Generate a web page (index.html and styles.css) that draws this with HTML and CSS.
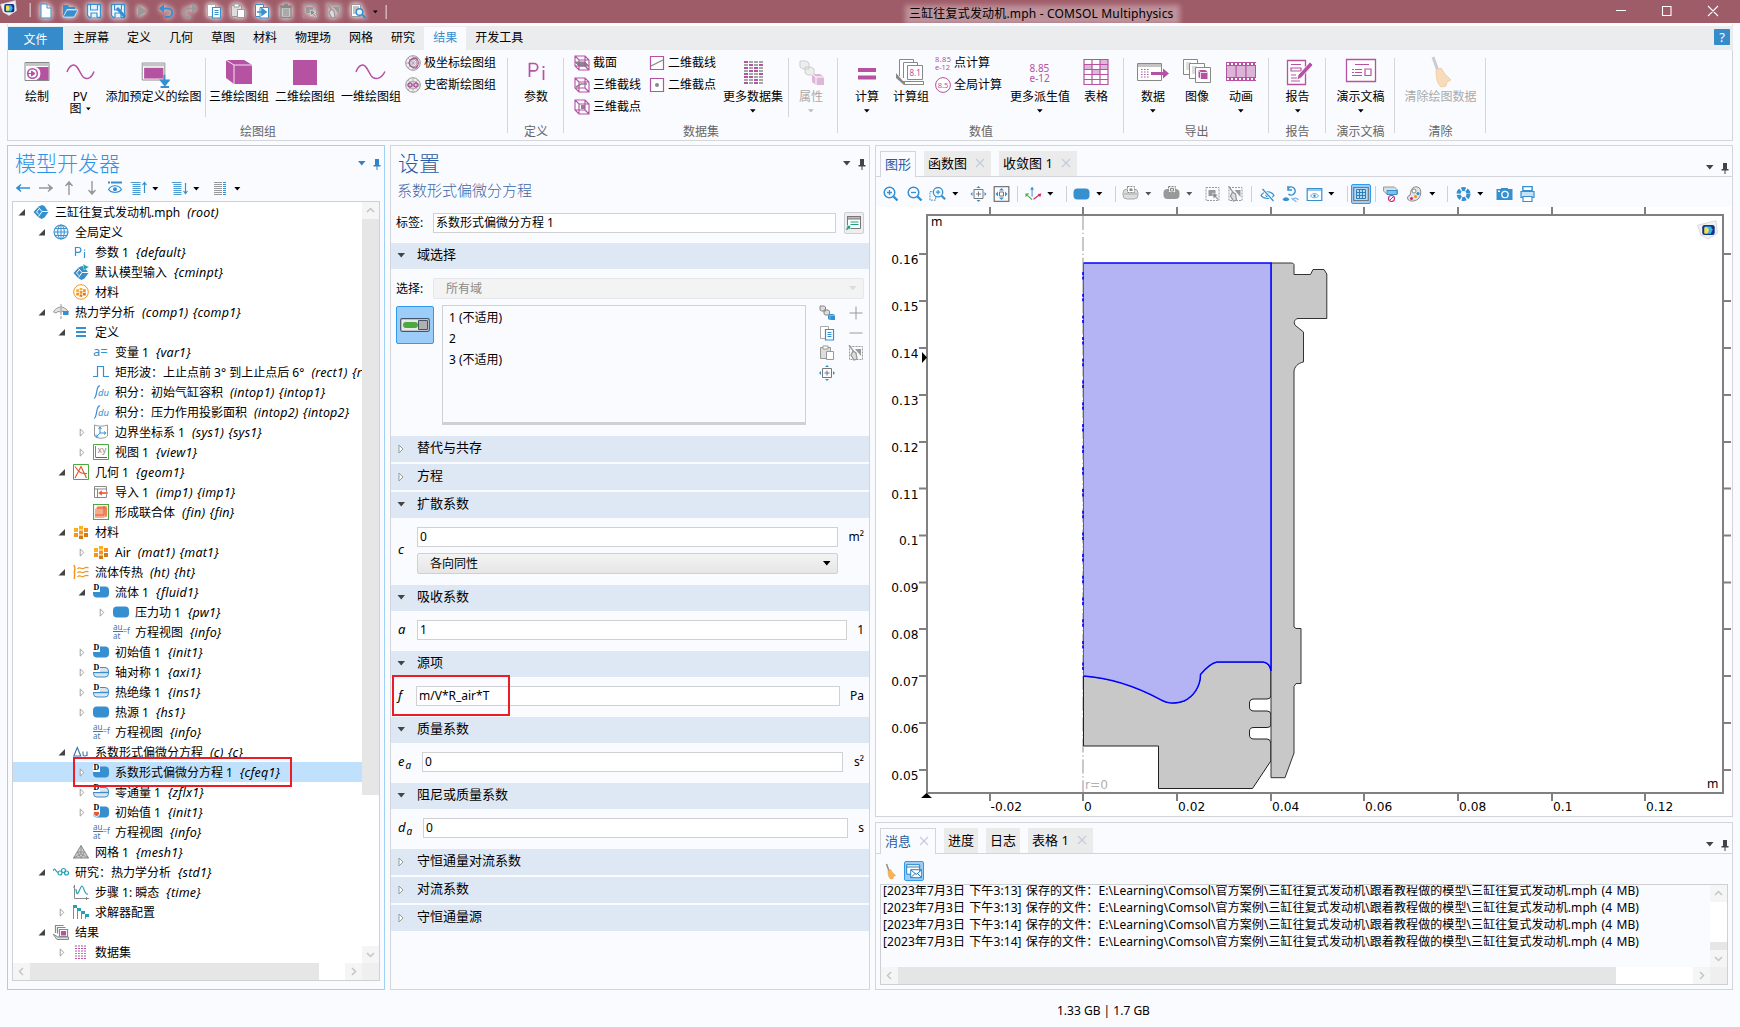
FILE: index.html
```html
<!DOCTYPE html>
<html lang="zh-CN">
<head>
<meta charset="utf-8">
<title>三缸往复式发动机.mph - COMSOL Multiphysics</title>
<link rel="stylesheet" href="styles.css">
</head>
<body>
<svg class="sprite" aria-hidden="true">
  <!-- shared small glyphs -->
  <symbol id="tri" viewBox="0 0 8 5"><path d="M0 0h7.500L3.750 4.500z" fill="currentColor"/></symbol>
  <symbol id="pin" viewBox="0 0 8 11"><path d="M2 0h4v6h1.500v1.500h-3V11h-1V7.500h-3V6H2z" fill="currentColor"/></symbol>
  <symbol id="open" viewBox="0 0 8 8"><path d="M7 .5v6.500H.5z" fill="#444"/></symbol>
  <symbol id="shut" viewBox="0 0 8 10"><path d="M2 1l4 4-4 4z" fill="#fff" stroke="#999"/></symbol>
  <symbol id="x" viewBox="0 0 10 10"><path d="M1 1l8 8M9 1L1 9" fill="none" stroke="#c3cbdc" stroke-width="1.200"/></symbol>
  <!-- 16px toolbar icons -->
  <symbol id="q-new" viewBox="0 0 16 16"><path d="M3 1h6l4 4v10H3z" fill="#fff" stroke="#368fcf"/><path d="M9 1v4h4" fill="#fff" stroke="#368fcf"/></symbol>
  <symbol id="q-open" viewBox="0 0 16 16"><path d="M1 14V2h5l1 2h6v2H5z" fill="#368fcf"/><path d="M5 7h11l-4 7H1z" fill="#368fcf" stroke="#fff" stroke-width=".6"/></symbol>
  <symbol id="q-save" viewBox="0 0 16 16"><path d="M1.500 1.500h13v13h-11l-2-2z" fill="#fff" stroke="#368fcf" stroke-width="1.400"/><path d="M4.500 2v5h7V2M5 14.500V10h6v4.500" fill="#e6f2fb" stroke="#368fcf" stroke-width="1.200"/></symbol>
  <symbol id="q-saveas" viewBox="0 0 16 16"><use href="#q-save"/><path d="M7 5l8 9" stroke="#368fcf" stroke-width="3"/></symbol>
  <symbol id="q-play" viewBox="0 0 16 16"><path d="M4 2l9 6-9 6z" fill="#999"/></symbol>
  <symbol id="q-undo" viewBox="0 0 16 16"><path d="M2 5.500h8a4 4 0 0 1 0 8.500H7" fill="none" stroke="#368fcf" stroke-width="1.800"/><path d="M6 1v9L1 5.500z" fill="#368fcf"/></symbol>
  <symbol id="q-redo" viewBox="0 0 16 16"><path d="M14 5.500H6A4 4 0 0 0 6 14h3" fill="none" stroke="#999" stroke-width="1.800"/><path d="M10 1v9l5-4.500z" fill="#999"/></symbol>
  <symbol id="q-copy" viewBox="0 0 16 16"><path d="M1.500 1.500h8v12h-8z" fill="#fff" stroke="#aaa"/><path d="M6.500 4.500h8v10.500h-8z" fill="#fff" stroke="#368fcf" stroke-width="1.200"/><path d="M8.500 7.500h4M8.500 9.500h4M8.500 11.500h4" stroke="#368fcf"/></symbol>
  <symbol id="q-paste" viewBox="0 0 16 16"><path d="M1.500 2.500h10v11h-10z" fill="#ddd" stroke="#999"/><path d="M4 1h5v3H4z" fill="#fff" stroke="#999"/><path d="M7.500 6.500h7v8h-7z" fill="#fff" stroke="#999"/></symbol>
  <symbol id="q-dup" viewBox="0 0 16 16"><path d="M1.500 1.500h8v12h-8z" fill="#fff" stroke="#368fcf"/><path d="M6 4.500h8.500V15H6z" fill="#fff" stroke="#368fcf"/><path d="M3 9h7M8 6l4 3-4 3z" stroke="#368fcf" stroke-width="1.600" fill="#368fcf"/></symbol>
  <symbol id="q-trash" viewBox="0 0 16 16"><path d="M3 4.500h10v10H3zM2 3h12M6 1.500h4" fill="#ccc" stroke="#888" stroke-width="1.300"/><path d="M6 6v7M8 6v7M10 6v7" stroke="#888"/></symbol>
  <symbol id="sel" viewBox="0 0 16 16"><path d="M1.500 1.500h13v13h-13z" fill="none" stroke="#999" stroke-dasharray="2 1"/><path d="M4 4h7v6H4z" fill="#999"/><path d="M8 7l6 2-2.500 1.300 3 3-1 1-3-3L9 13z" fill="#888" stroke="#fff" stroke-width=".5"/></symbol>
  <symbol id="desel" viewBox="0 0 16 16"><path d="M1.500 1.500h13v13h-13z" fill="none" stroke="#999" stroke-dasharray="2 1"/><path d="M7 4h6v7z" fill="#999"/><path d="M1 0l5 7M5 6l3 2 1 6-3 1-3-5z" stroke="#999" stroke-width="1.300" fill="#ddd"/></symbol>
  <symbol id="q-find" viewBox="0 0 16 16"><path d="M1.500 1.500h9v12h-9z" fill="#fff" stroke="#999"/><path d="M3 4h6M3 6h6M3 8h4M3 10h3" stroke="#888"/><circle cx="9.500" cy="9" r="3.300" fill="#e6f2fb" stroke="#368fcf" stroke-width="1.500"/><path d="M12 11.500l3.500 3.500" stroke="#368fcf" stroke-width="2"/></symbol>
  <symbol id="logo" viewBox="0 0 16 16"><path d="M.5 4l8-2 6-1.500 1 9.500-7 4.500-5.500-3z" fill="#f1f1f4" stroke="#d0d0d6" stroke-width=".6"/><rect x="4" y="3.800" width="9.500" height="7.700" rx="1.800" fill="#13328c"/><path d="M6 5h4.500l1.500 2.500-1.500 3H6z" fill="#35b6e6"/><path d="M5.500 5.500h2.500l1.200 2.200L8 10.200H5.500z" fill="#f3e24a"/></symbol>
  <!-- tree icons -->
  <symbol id="t-root" viewBox="0 0 16 16"><path d="M5.500 2.500L9 1l2.500 1L15.500 8l-4 5.500L8.500 15 5 13 .5 8z" fill="#368fcf"/><path d="M5.500 3.500L9 7.500h6.500M9 7.500L5.500 12.500M6 5L3.500 8 6 10.500" stroke="#fff" stroke-width="1" fill="none"/></symbol>
  <symbol id="t-globe" viewBox="0 0 16 16"><circle cx="8" cy="8" r="7" fill="#eef6fc" stroke="#368fcf" stroke-width="1.100"/><ellipse cx="8" cy="8" rx="3.300" ry="7" fill="none" stroke="#368fcf"/><path d="M1 8h14M2 4.500h12M2 11.500h12M8 1v14" stroke="#368fcf" stroke-width=".9"/></symbol>
  <symbol id="t-pi" viewBox="0 0 16 16"><path d="M2.500 12V3.500h3a2.400 2.400 0 0 1 0 4.800h-3M11.500 8v6" fill="none" stroke="#368fcf" stroke-width="1.200"/><path d="M11 5.500h1.200v1.200H11z" fill="#368fcf"/></symbol>
  <symbol id="t-input" viewBox="0 0 16 16"><use href="#t-root" y="1"/><path d="M10 0l6 3-5 3z" fill="#1fa3a8" stroke="#fff" stroke-width=".4"/></symbol>
  <symbol id="t-mat" viewBox="0 0 16 16"><path d="M1 4h4v4H1zM6 2h4v3.500H6z" fill="#fbb01c"/><path d="M11 4h4v4h-4zM6 6.500h4v4H6zM1 9h4v4H1z" fill="#f39322"/><path d="M11 9h4v4h-4zM6 11.500h4V15H6z" fill="#d07a18"/></symbol>
  <symbol id="t-gmat" viewBox="0 0 16 16"><circle cx="8" cy="8" r="7.300" fill="#fff" stroke="#f39322"/><svg x="2.500" y="2.500" width="11" height="11" viewBox="0 0 16 16"><use href="#t-mat"/></svg></symbol>
  <symbol id="t-axi" viewBox="0 0 16 16"><path d="M.5 8c1-3 5-5 7.500-5s6 2 7.500 5l-3 1-2-2-2.500 1-3-.5L3 9z" fill="#e3e3e3" stroke="#999"/><path d="M10 7h5.500v4H10z" fill="#368fcf"/><path d="M8 0v16" stroke="#999" stroke-dasharray="3 1"/></symbol>
  <symbol id="t-def" viewBox="0 0 16 16"><path d="M3 4h10M3 8h10M3 12h10" stroke="#368fcf" stroke-width="2"/></symbol>
  <symbol id="t-rect" viewBox="0 0 16 16"><path d="M0 12.500h4.500v-10h6v10H16" fill="none" stroke="#368fcf" stroke-width="1.200"/></symbol>
  <symbol id="t-sys" viewBox="0 0 16 16"><path d="M1.500 1c3 1.500 10 1.500 13 0v11c-3 3-10 3-13 0z" fill="none" stroke="#999"/><path d="M7 3.500V9l-3.500 3.500M7 9h5M5.500 5L7 3l1.500 2M11 7.500L13 9l-2 1.500M3 10.500v2.500h2.500" stroke="#368fcf" fill="none"/></symbol>
  <symbol id="t-view" viewBox="0 0 16 16"><path d="M.5.5h15v15H.5z" fill="#fff" stroke="#4aa93f"/><path d="M2.500 2v11" stroke="#4aa93f"/><path d="M2.500 13.500H14" stroke="#d5286c"/></symbol>
  <symbol id="t-geom" viewBox="0 0 16 16"><path d="M.5.5h15v15H.5z" fill="#fff" stroke="#4aa93f"/><path d="M2 2.500c3 4 5 8 12 7M2 14L8 2.500 13.500 14" fill="none" stroke="#e8592b" stroke-width="1.200"/></symbol>
  <symbol id="t-imp" viewBox="0 0 16 16"><path d="M1.500 2.500h12v11h-12zM1.500 5h12M4.500 5v8.500" fill="#fff" stroke="#888"/><path d="M5 9l4-3v2h6v2H9v2z" fill="#e8592b" stroke="#fff" stroke-width=".4"/></symbol>
  <symbol id="t-fin" viewBox="0 0 16 16"><path d="M.5.5h15v15H.5z" fill="#fff" stroke="#4aa93f" stroke-width="1.200"/><path d="M2 5l3-3h9v9l-3 3H2z" fill="#f5ab8c"/><path d="M2 11h9V2M4 4h9v9" fill="none" stroke="#e8592b"/></symbol>
  <symbol id="t-ht" viewBox="0 0 16 16"><path d="M1 1c2 4 0 6 .5 8S1 13 1.500 15" fill="none" stroke="#f39322" stroke-width="1.500"/><path d="M4.500 5c2-3 4 .5 6-.5s3-2 5-.5M4.500 9c2-3 4 .5 6-.5s3-2 5-.5M4.500 13c2-3 4 .5 6-.5s3-2 5-.5" fill="none" stroke="#f39322" stroke-width="1.200"/></symbol>
  <symbol id="t-dom" viewBox="0 0 16 16"><rect x="0" y="2.500" width="16" height="11" rx="4" fill="#368fcf"/></symbol>
  <symbol id="t-bnd" viewBox="0 0 16 16"><rect x=".5" y="3.500" width="15" height="9.500" rx="3.500" fill="#e3e4e8" stroke="#368fcf"/><path d="M0 8.500h16" stroke="#368fcf" stroke-width="1.400"/></symbol>
  <symbol id="t-du" viewBox="0 0 16 16"><path d="M.8 12L4.300 3.500 7.800 12zM10 7.500v3c0 2 4 2 4 0v-3V12" fill="none" stroke="#3f74a8" stroke-width="1.100"/></symbol>
  <symbol id="t-mesh" viewBox="0 0 16 16"><path d="M8 1.500L15.500 14H.5z" fill="#ccc" stroke="#888"/><path d="M4.500 8h7L8 14zM8 1.500V10M.5 14L8 10l7.500 4" fill="none" stroke="#888" stroke-width=".8"/></symbol>
  <symbol id="t-std" viewBox="0 0 16 16"><path d="M0 7c2-5 3 2 5 1" fill="none" stroke="#26a0b5" stroke-width="1.200"/><circle cx="7" cy="9" r="2" fill="none" stroke="#26a0b5" stroke-width="1.200"/><circle cx="10.500" cy="6.500" r="2" fill="none" stroke="#26a0b5" stroke-width="1.200"/><circle cx="13.500" cy="9" r="2" fill="none" stroke="#26a0b5" stroke-width="1.200"/></symbol>
  <symbol id="t-step" viewBox="0 0 16 16"><path d="M1.500 1v13.500H16M0 3h1.500M13.500 13v3" fill="none" stroke="#888"/><path d="M3 5c1 12 4-3 6-3s2 9 6 8" fill="none" stroke="#26a0b5" stroke-width="1.200"/></symbol>
  <symbol id="t-sol" viewBox="0 0 16 16"><path d="M.5 1v14M4.500 4v11M8.500 7v8M12.500 11v4" stroke="#888"/><path d="M0 1h4v3H0zM4 4h4v3H4zM8 7h4v3H8zM12 10h4v3h-4z" fill="#26a0b5"/></symbol>
  <symbol id="t-res" viewBox="0 0 16 16"><path d="M2.500 9V1.500h8M4.500 9.500v-6h8M6.500 5.500h8v7h-8z" fill="#fff" stroke="#888" stroke-width="1.200"/><path d="M8 7h5v4.500H8z" fill="#b552a2"/><path d="M0 10l5 3h10.500v2.500H4z" fill="#ddd" stroke="#888"/></symbol>
  <symbol id="t-data" viewBox="0 0 16 16"><g stroke="#b552a2" stroke-dasharray="2 1"><path d="M2 2h12M2 4.500h12M2 7h12M2 12h12M2 14.500h12"/><path d="M2 9.500h12" stroke="#999"/></g></symbol>
  <!-- model builder toolbar -->
  <symbol id="a-l" viewBox="0 0 16 16"><path d="M2 8h13M6 4.500L2 8l4 3.500" fill="none" stroke="currentColor" stroke-width="1.400"/><path d="M1 8l4-3v6z" fill="currentColor"/></symbol>
  <symbol id="eye" viewBox="0 0 16 16"><path d="M1.500 9.500c3-5 10-5 13 0-3 4-10 4-13 0z" fill="none" stroke="currentColor" stroke-width="1.200"/><circle cx="8" cy="9.300" r="2" fill="currentColor"/></symbol>
  <symbol id="m-eye" viewBox="0 0 16 16"><path d="M1 2.500h2M4 2.500h11" stroke="#368fcf" stroke-width="1.800"/><use href="#eye"/></symbol>
  <symbol id="m-list" viewBox="0 0 12 16"><path d="M0 2.500h10M2 4.500h8M2 6.500h8M2 8.500h8M2 10.500h8M2 12.500h8M2 14.500h8" stroke="#368fcf" stroke-width=".9"/></symbol>
  <symbol id="m-up" viewBox="0 0 17 16"><use href="#m-list" width="12" height="16"/><path d="M14 13V3M12 5l2-2.500L16 5" stroke="#368fcf" fill="none" stroke-width="1.200"/></symbol>
  <symbol id="m-down" viewBox="0 0 17 16"><use href="#m-list" width="12" height="16"/><path d="M14 3v10M12 11l2 2.500 2-2.500" stroke="#368fcf" fill="none" stroke-width="1.200"/></symbol>
  <symbol id="m-col" viewBox="0 0 16 16"><path d="M1 2.500h8M1 4.500h8M1 6.500h8M1 8.500h8M1 10.500h8M1 12.500h8M1 14.500h8" stroke="#999"/><path d="M10 2.500h3M10 4.500h3M10 6.500h3M10 8.500h3M10 10.500h3M10 12.500h3M10 14.500h3" stroke="#368fcf"/></symbol>
  <!-- selection icons -->
  <symbol id="s-cubes" viewBox="0 0 16 16"><g stroke="#888" fill="#ddd"><path d="M1 1h4l1.500 1v4h-4L1 5zM5 5h4l1.500 1v4h-4L5 9z"/></g><path d="M9 9h5l2 1v5h-5l-2-1z" fill="#368fcf"/><path d="M9 9l2 1.500h5M11 10.500V15" stroke="#9cc9ea" stroke-width=".7" fill="none"/></symbol>
  <symbol id="z-fit" viewBox="0 0 16 16"><path d="M3.500 3.500h9v9h-9zM8 5.500v5M5.500 8h5" fill="none" stroke="#777"/><path d="M8 0l2 2H6zM8 16l2-2H6zM0 8l2-2v4zM16 8l-2-2v4z" fill="#368fcf"/></symbol>
  <symbol id="z-ext" viewBox="0 0 16 16"><path d="M.7.7h14.600v14.600H.700z" fill="none" stroke="#777" stroke-width="1.300"/><path d="M6 6h4v4H6z" fill="none" stroke="#777"/><path d="M8 2l2.500 2.500h-5zM8 14l2.500-2.500h-5zM2 8l2.500-2.500v5zM14 8l-2.500-2.500v5z" fill="#368fcf"/></symbol>
  <!-- graphics toolbar -->
  <symbol id="z-lens" viewBox="0 0 16 16"><circle cx="7" cy="6.500" r="5.300" fill="none" stroke="#368fcf" stroke-width="1.500"/><path d="M11 10.500l4 4" stroke="#368fcf" stroke-width="2.400"/><path d="M4.500 6.500h5" stroke="#368fcf" stroke-width="1.300"/></symbol>
  <symbol id="z-in" viewBox="0 0 16 16"><use href="#z-lens"/><path d="M7 4v5" stroke="#368fcf" stroke-width="1.300"/></symbol>
  <symbol id="z-box" viewBox="0 0 18 16"><path d="M1 5.500h6v9H1z" fill="none" stroke="#368fcf" stroke-dasharray="2 1"/><svg x="3" y="0" width="15" height="15" viewBox="0 0 16 16"><circle cx="7" cy="6.500" r="5.300" fill="#fafbff"/><use href="#z-in"/></svg></symbol>
  <symbol id="z-axes" viewBox="0 0 18 16"><path d="M7.500 11V2.500" stroke="#368fcf"/><path d="M7.500 0l2 3.500h-4z" fill="#368fcf"/><path d="M7.500 14L2.500 9.500" stroke="#4aa93f" stroke-width="1.200"/><path d="M.5 7.500h4l-4 4z" fill="#4aa93f"/><path d="M9 13.500L15 9" stroke="#d5286c" stroke-width="1.200"/><path d="M17.500 7.500l-1.500 4-2.500-3.500z" fill="#d5286c"/></symbol>
  <symbol id="z-dom1" viewBox="0 0 16 16"><rect x=".5" y="3" width="15" height="10" rx="4" fill="#ddd" stroke="#aaa"/><path d="M1 8h14" stroke="#aaa"/><path d="M5 .5h7v6H5z" fill="#fff" stroke="#888" stroke-dasharray="2 1"/><path d="M7 2.500h3V5H7z" fill="#888"/></symbol>
  <symbol id="z-dom2" viewBox="0 0 16 16"><rect x="0" y="3" width="16" height="10" rx="4" fill="#999"/><path d="M5 .5h7v6H5z" fill="#eee" stroke="#888" stroke-dasharray="2 1"/><path d="M7 2.500h3V5H7z" fill="none" stroke="#888"/></symbol>
  <symbol id="z-hide" viewBox="0 0 16 16"><use href="#eye"/><path d="M3 3l11 12" stroke="#fafbff" stroke-width="3"/><path d="M3 3l11 12" stroke="#368fcf" stroke-width="1.300"/></symbol>
  <symbol id="z-reset" viewBox="0 0 16 16"><path d="M5 8a4 4 0 1 0 0-6M4.500 0v4h4" transform="translate(1)" fill="none" stroke="#368fcf" stroke-width="1.500"/><path d="M0 13.500c2-3 5-3 7 0-2 2-5 2-7 0z" fill="#368fcf"/><path d="M9 12l5 4M10 14c2-3 4-2 6 0" stroke="#7fb6e0" stroke-width="1.200" fill="none"/></symbol>
  <symbol id="z-view" viewBox="0 0 16 16"><path d="M.7 2.500h14.600v12H.7z" fill="#fff" stroke="#368fcf" stroke-width="1.200"/><path d="M1 4h14" stroke="#368fcf"/><svg x="2.500" y="4" width="11" height="10" viewBox="0 0 16 16"><use href="#eye"/></svg></symbol>
  <symbol id="z-grid" viewBox="0 0 16 16"><path d="M.7 1.500h14.600v13H.7z" fill="#b7daf5" stroke="#777" stroke-width="1.200"/><path d="M3.500 3.500h9v9h-9zM6.500 3.500v9M9.500 3.500v9M3.500 6.500h9M3.500 9.500h9" fill="none" stroke="#2a7fbf"/></symbol>
  <symbol id="z-clip" viewBox="0 0 16 16"><path d="M1 1h11l3 3v4H4L1 5z" fill="#ddd" stroke="#999"/><path d="M4.500 4.500h10v4h-10z" fill="#7fc1ee" stroke="#368fcf"/><circle cx="9" cy="12.500" r="3" fill="#fff" stroke="#d5286c" stroke-width="1.200"/><path d="M7 14.500l4-4" stroke="#d5286c"/></symbol>
  <symbol id="z-pal" viewBox="0 0 16 16"><path d="M11 1c5 1 4 11-1 13-4 2-9 1-9-2s3-2 3-4c0-4 2-8 7-7z" fill="#e4e4e6" stroke="#888"/><circle cx="7.500" cy="5" r="2" fill="#fff" stroke="#888"/><circle cx="11.500" cy="7.500" r="1.600" fill="#368fcf"/><circle cx="9" cy="10.500" r="1.500" fill="#f39322"/><circle cx="5" cy="12.500" r="1.500" fill="#d5286c"/></symbol>
  <symbol id="z-ap" viewBox="0 0 16 16"><circle cx="8" cy="8" r="5" fill="none" stroke="#368fcf" stroke-width="4" stroke-dasharray="4 1.236"/></symbol>
  <symbol id="z-cam" viewBox="0 0 16 16"><path d="M0 3h4.500V2h7v1H16v11H0z" fill="#368fcf"/><circle cx="8.500" cy="8.500" r="3.200" fill="#368fcf" stroke="#fff" stroke-width="1.300"/><path d="M1.500 4.500h2v1.500h-2z" fill="#fff"/></symbol>
  <symbol id="z-prn" viewBox="0 0 16 16"><path d="M3.500 5.500V.700h9v4.800M1.500 5.500h13v6h-13z" fill="#c9dff2" stroke="#368fcf" stroke-width="1.200"/><path d="M3.500.700h9v3.800h-9zM3.500 10.500h9v5h-9z" fill="#fff" stroke="#368fcf" stroke-width="1.200"/></symbol>
  <symbol id="broom" viewBox="0 0 22 32"><path d="M3 1l5 14" stroke="#8d8d8d" stroke-width="3"/><path d="M6 14l5-2 4 6 6 6-4 2-1 4-5 1c-4-4-5-9-5-17z" fill="#f6b35b" stroke="#e59330"/></symbol>
  <symbol id="z-msg" viewBox="0 0 16 16"><path d="M.7 1.700h13v9.500H.7z" fill="#fff" stroke="#2a7fbf"/><path d="M1 4h12.500" stroke="#2a7fbf"/><path d="M4.700 6.700h11v8h-11zM5 7l5.200 4.500L15.500 7M5 14.500l4-4M15.500 14.500l-4-4" fill="#fff" stroke="#2a7fbf"/></symbol>
  <!-- cut cube frame used by the data set buttons -->
  <symbol id="cubef" viewBox="0 0 16 16"><path d="M1 1h10l4 4v10H5l-4-4zM1 1l4 4h10M5 5v10M11 1v10H1M11 11l4 4" fill="none" stroke="#b552a2" stroke-width="1.100"/></symbol>
  <symbol id="polar" viewBox="0 0 16 16"><circle cx="8" cy="8" r="7.300" fill="#eee" stroke="#999"/><circle cx="8" cy="8" r="4" fill="none" stroke="#aaa"/><path d="M.7 8h14.600M8 .7v14.600M3 3l10 10M13 3L3 13" stroke="#aaa" stroke-width=".8"/></symbol>
</svg>

<header class="titlebar">
  <svg class="app"><use href="#logo"/></svg>
  <i class="tsep"></i>
  <div class="quick">
    <svg><use href="#q-new"/></svg><svg><use href="#q-open"/></svg><svg><use href="#q-save"/></svg><svg><use href="#q-saveas"/></svg><svg><use href="#q-play"/></svg><svg><use href="#q-undo"/></svg><svg><use href="#q-redo"/></svg><svg><use href="#q-copy"/></svg><svg><use href="#q-paste"/></svg><svg><use href="#q-dup"/></svg><svg><use href="#q-trash"/></svg><svg><use href="#sel"/></svg><svg><use href="#desel"/></svg><svg><use href="#q-find"/></svg>
  </div>
  <svg class="tri qtri"><use href="#tri"/></svg>
  <i class="tsep"></i>
  <div class="title">三缸往复式发动机.mph - COMSOL Multiphysics</div>
  <svg class="winctl" viewBox="0 0 112 20"><path d="M5 9.500h10M51.500 5.500h8.500v9h-8.500zM97 5l10 10M107 5L97 15" fill="none" stroke="#fff" stroke-width="1.100"/></svg>
</header>

<div class="ribbon">
  <nav class="tabs">
    <span class="file">文件</span><span>主屏幕</span><span>定义</span><span>几何</span><span>草图</span><span>材料</span><span>物理场</span><span>网格</span><span>研究</span><span class="on">结果</span><span>开发工具</span>
    <b class="help">?</b>
  </nav>
  <div class="groups">
    <section class="grp g1">
      <div class="items">
        <div class="rb w42"><svg viewBox="0 0 32 32"><path d="M4 6.500h24v18H4z" fill="#fff" stroke="#888"/><path d="M4.500 7h23v3h-23z" fill="#c4c4c4"/><path d="M5 11h22.500v13H5z" fill="#b552a2"/><path d="M5 11h10a7 7 0 0 1 0 13H5z" fill="#fafbff"/><circle cx="11.500" cy="17.500" r="4.800" fill="#fafbff" stroke="#b552a2" stroke-width="1.600"/><path d="M6 17.500h6M10.500 15l3.500 2.500-3.500 2.500z" fill="#b552a2" stroke="#b552a2"/></svg><span>绘制</span></div>
        <div class="rb w44"><svg viewBox="0 0 32 32"><path d="M3 16.500C6 8 11 8 14 13l4 7c3 5 9 4 12-4" transform="translate(0 -.5)" fill="none" stroke="#b552a2" stroke-width="1.500"/></svg><span class="pv">PV</span><em class="two">图 <svg class="tri"><use href="#tri"/></svg></em></div>
        <div class="rb w103"><svg viewBox="0 0 32 34"><path d="M3.500 7.500h24v18h-24z" fill="#fff" stroke="#888"/><path d="M4 8h23v3H4z" fill="#c4c4c4"/><path d="M5.500 12.500h20.500v11.500H5.500z" fill="#b552a2"/><path d="M27 20v9M23 33h9M27.500 31l-4-5h8z" stroke="#368fcf" stroke-width="2" fill="#368fcf"/></svg><span>添加预定义的绘图</span></div>
        <i class="isep"></i>
        <div class="rb w66"><svg viewBox="0 0 32 32"><path d="M3 4h18l8 5H11z" fill="#d9a5d0"/><path d="M3 4h18l8 5v19H11L3 22z" fill="#b552a2"/><path d="M3 4l8 5h18M11 9v19" fill="none" stroke="#f4e3f1"/></svg><span>三维绘图组</span></div>
        <div class="rb w66"><svg viewBox="0 0 32 32"><path d="M4 4h24v25H4z" fill="#b552a2"/></svg><span>二维绘图组</span></div>
        <div class="rb w66"><svg viewBox="0 0 32 32"><path d="M1 16.500C4 8 9 8 12 13l4 7c3 5 10 4 14-4" transform="translate(0 -.5)" fill="none" stroke="#b552a2" stroke-width="1.500"/></svg><span>一维绘图组</span></div>
        <div class="smalls">
          <div><svg viewBox="0 0 16 16"><use href="#polar"/><path d="M4 8c1-3 4-5 7-5 3 3 3 7 0 10-3 0-6-2-7-5z" fill="none" stroke="#b552a2" stroke-width="1.300"/></svg>极坐标绘图组</div>
          <div><svg viewBox="0 0 16 16"><use href="#polar"/><circle cx="5" cy="8" r="2" fill="none" stroke="#b552a2" stroke-width="1.300"/><circle cx="11" cy="8" r="2" fill="none" stroke="#b552a2" stroke-width="1.300"/></svg>史密斯绘图组</div>
        </div>
      </div>
      <label>绘图组</label>
    </section>
    <section class="grp g2">
      <div class="items ctr"><div class="rb w42"><svg viewBox="0 0 32 32"><path d="M9.500 21V7.500h4.500a3.700 3.700 0 0 1 0 7.400H9.500M23.500 14v10" fill="none" stroke="#b552a2" stroke-width="1.700"/><path d="M22.600 10h1.800v2h-1.800z" fill="#b552a2"/></svg><span>参数</span></div></div>
      <label>定义</label>
    </section>
    <section class="grp g3">
      <div class="items">
        <div class="smalls c1">
          <div><svg viewBox="0 0 16 16"><path d="M1 7l4 4h10l-4-4z" fill="#888" stroke="#888"/><use href="#cubef"/></svg>截面</div>
          <div><svg viewBox="0 0 16 16"><path d="M2 10l5-3h6" fill="none" stroke="#888" stroke-width="1.500"/><use href="#cubef"/></svg>三维截线</div>
          <div><svg viewBox="0 0 16 16"><path d="M7 6h4v4H7z" fill="#888"/><use href="#cubef"/></svg>三维截点</div>
        </div>
        <div class="smalls c2">
          <div><svg viewBox="0 0 16 16"><path d="M1.500 1.500h13v13h-13z" fill="#fff" stroke="#b552a2" stroke-width="1.200"/><path d="M2 11l12-6" stroke="#888" stroke-width="1.300"/></svg>二维截线</div>
          <div><svg viewBox="0 0 16 16"><path d="M1.500 1.500h13v13h-13z" fill="#fff" stroke="#b552a2" stroke-width="1.200"/><circle cx="8" cy="8" r="2" fill="#888"/></svg>二维截点</div>
        </div>
        <div class="rb w64"><svg viewBox="0 0 32 32"><g stroke="#a6a6a6" stroke-width="2" stroke-dasharray="4 1"><path d="M7 6h19M7 9h19M7 12h19M7 15h19M7 18h19M7 21h19M7 24h19M7 27h19"/></g><g stroke="#b552a2" stroke-width="2"><path d="M7 6h4M12 9h4M22 9h4M7 12h4M17 12h4M12 15h4M17 15h4M7 18h4M22 18h4M7 21h4M12 21h4M17 24h4M7 27h4M17 27h4"/></g></svg><span>更多数据集</span><svg class="tri"><use href="#tri"/></svg></div>
        <i class="isep"></i>
        <div class="rb w44 dis"><svg viewBox="0 0 32 32"><g fill="#eee" stroke="#ccc"><path d="M5 5h6l3 2v6H8l-3-2zM10 11h6l3 2v6h-6l-3-2z"/></g><path d="M17 18h8l4 3v8h-8l-4-3z" fill="#ddb6d8"/><path d="M17 18l4 3h8M21 21v8" stroke="#fff" fill="none"/></svg><span>属性</span><svg class="tri"><use href="#tri"/></svg></div>
      </div>
      <label>数据集</label>
    </section>
    <section class="grp g4">
      <div class="items">
        <div class="rb w42"><svg viewBox="0 0 32 32"><path d="M7 14h18M7 21.500h18" stroke="#b552a2" stroke-width="4"/></svg><span>计算</span><svg class="tri"><use href="#tri"/></svg></div>
        <div class="rb w46"><svg viewBox="0 0 32 32"><path d="M4.500 20V3.500h14v3M8.500 22V6.500h14v3M12.500 9.500h15v14h-15z" fill="#fff" stroke="#888"/><path d="M1 17l7 8h21v4H9L1 22z" fill="#888"/><path d="M9.500 25.500h19v3h-19z" fill="#fff" stroke="#888"/><text x="14.500" y="20" class="num" font-size="8">8.1</text></svg><span>计算组</span></div>
        <div class="smalls c3">
          <div><svg viewBox="0 0 16 16"><text x="0" y="6.500" class="num" font-size="7.500" textLength="16">8.85</text><text x="0" y="15" class="num" font-size="7.500" textLength="15">e-12</text></svg>点计算</div>
          <div><svg viewBox="0 0 16 16"><circle cx="8" cy="8" r="7.400" fill="#fff" stroke="#b552a2"/><text x="2.800" y="10.800" class="num" font-size="7.500">8.5</text></svg>全局计算</div>
        </div>
        <div class="rb w64"><svg viewBox="0 0 32 32"><text x="5.500" y="15.500" class="num" font-size="10">8.85</text><text x="5.500" y="26" class="num" font-size="10">e-12</text></svg><span>更多派生值</span><svg class="tri"><use href="#tri"/></svg></div>
        <div class="rb w48"><svg viewBox="0 0 32 32"><path d="M4 3.500h24v25H4z" fill="#fff"/><path d="M20 4h8v10h-8zM12 14h8v5h-8zM4 9h8v5H4z" fill="#deb8d8"/><path d="M4 3.500h24v25H4zM4 8.500h24M4 13.500h24M4 18.500h24M4 23.500h24M12 3.500v25M20 3.500v25" fill="none" stroke="#b552a2" stroke-width="1.200"/></svg><span>表格</span></div>
      </div>
      <label>数值</label>
    </section>
    <section class="grp g5">
      <div class="items">
        <div class="rb w44"><svg viewBox="0 0 32 32"><path d="M.5 7.500h24v17H.5z" fill="#fff" stroke="#888"/><path d="M1 8h23v3H1z" fill="#c4c4c4"/><g stroke="#b552a2" stroke-dasharray="1.500 1.500"><path d="M4 13.500h9M4 16h9M4 18.500h9M4 21h9"/></g><path d="M14 17.500h12" stroke="#b552a2" stroke-width="3"/><path d="M26 12.500l6 5-6 5z" fill="#b552a2"/></svg><span>数据</span><svg class="tri"><use href="#tri"/></svg></div>
        <div class="rb w44"><svg viewBox="0 0 32 32"><g fill="#fff" stroke="#888"><path d="M2.500 3.500h14v15h-14z"/><path d="M5 6h5v8H5z" fill="#ddd" stroke="none"/><path d="M8.500 7.500h15v15h-15z"/><path d="M11 10h5v8h-5z" fill="#ddd" stroke="none"/><path d="M14.500 11.500h15v15h-15z"/></g><path d="M17.500 14h7l2 2v7h-7l-2-2z" fill="#b552a2"/><path d="M17.500 14l2 2.500h7M19.500 16.500V23" stroke="#fff" stroke-width=".8" fill="none"/></svg><span>图像</span></div>
        <div class="rb w44"><svg viewBox="0 0 32 32"><path d="M1 6h30v19H1z" fill="#b552a2"/><path d="M2 10h8.500v11H2zM11.700 10h8.600v11h-8.600zM21.500 10H30v11h-8.500z" fill="#dcb4d7"/><path d="M2 8h29M2 23h29" stroke="#fff" stroke-width="2" stroke-dasharray="2 2"/></svg><span>动画</span><svg class="tri"><use href="#tri"/></svg></div>
      </div>
      <label>导出</label>
    </section>
    <section class="grp g6">
      <div class="items ctr"><div class="rb w42"><svg viewBox="0 0 32 32"><path d="M5.500 4.500h18v24h-18z" fill="#fff" stroke="#b552a2" stroke-width="1.300"/><path d="M9 8.500h10M9 12h10v3H9zM9 19h5M9 22h6M9 25h9" fill="none" stroke="#b552a2" stroke-width="1.200"/><path d="M15 24l1-5L28 6l3 3-12 13z" fill="#b552a2" stroke="#fff" stroke-width=".8"/></svg><span>报告</span><svg class="tri"><use href="#tri"/></svg></div></div>
      <label>报告</label>
    </section>
    <section class="grp g7">
      <div class="items ctr"><div class="rb w64"><svg viewBox="0 0 32 32"><path d="M1.500 3.500h29v22h-29z" fill="#fff" stroke="#b552a2" stroke-width="1.300"/><path d="M10 8.500h14M7 13.500h2M10 13.500h7M7 16.500h2M10 16.500h7M7 19.500h10M20 13h6v6.500h-6z" fill="none" stroke="#b552a2" stroke-width="1.200"/></svg><span>演示文稿</span><svg class="tri"><use href="#tri"/></svg></div></div>
      <label>演示文稿</label>
    </section>
    <section class="grp g8">
      <div class="items ctr"><div class="rb w80 dis"><svg viewBox="0 0 32 32" opacity=".42"><use href="#broom" x="5" y="0" width="22" height="32"/></svg><span>清除绘图数据</span></div></div>
      <label>清除</label>
    </section>
  </div>
</div>

<main class="work">
  <section class="panel builder">
    <div class="phead"><h2>模型开发器</h2><svg class="tri dd"><use href="#tri"/></svg><svg class="pin"><use href="#pin"/></svg></div>
    <div class="mbar">
      <svg class="blue"><use href="#a-l"/></svg><svg class="gray rr"><use href="#a-l"/></svg><svg class="gray ru"><use href="#a-l"/></svg><svg class="gray rd"><use href="#a-l"/></svg><svg class="blue"><use href="#m-eye"/></svg>
      <svg class="wide"><use href="#m-up"/></svg><svg class="tri"><use href="#tri"/></svg><svg class="wide"><use href="#m-down"/></svg><svg class="tri"><use href="#tri"/></svg><svg class="wide"><use href="#m-col"/></svg><svg class="tri"><use href="#tri"/></svg>
    </div>
    <div class="tree">
      <div class="rows">
        <div class="row l0"><svg class="tw"><use href="#open"/></svg><svg><use href="#t-root"/></svg><span>三缸往复式发动机.mph</span><i>(root)</i></div>
        <div class="row l1"><svg class="tw"><use href="#open"/></svg><svg><use href="#t-globe"/></svg><span>全局定义</span></div>
        <div class="row l2"><svg class="tw"></svg><svg><use href="#t-pi"/></svg><span>参数 1</span><i>{default}</i></div>
        <div class="row l2"><svg class="tw"></svg><svg><use href="#t-input"/></svg><span>默认模型输入</span><i>{cminpt}</i></div>
        <div class="row l2"><svg class="tw"></svg><svg><use href="#t-gmat"/></svg><span>材料</span></div>
        <div class="row l1"><svg class="tw"><use href="#open"/></svg><svg><use href="#t-axi"/></svg><span>热力学分析</span><i>(comp1) {comp1}</i></div>
        <div class="row l2"><svg class="tw"><use href="#open"/></svg><svg><use href="#t-def"/></svg><span>定义</span></div>
        <div class="row l3"><svg class="tw"></svg><svg viewBox="0 0 16 16"><text x="0" y="12" class="bt" font-size="13">a=</text></svg><span>变量 1</span><i>{var1}</i></div>
        <div class="row l3"><svg class="tw"></svg><svg><use href="#t-rect"/></svg><span>矩形波：上止点前 3° 到上止点后 6°</span><i>(rect1) {rect1}</i></div>
        <div class="row l3"><svg class="tw"></svg><svg viewBox="0 0 16 16"><path d="M1 14c3 1 2-13 6-12" fill="none" stroke="#368fcf" stroke-width="1.200"/><text x="5" y="12" class="bt it" font-size="9.500">du</text></svg><span>积分：初始气缸容积</span><i>(intop1) {intop1}</i></div>
        <div class="row l3"><svg class="tw"></svg><svg viewBox="0 0 16 16"><path d="M1 14c3 1 2-13 6-12" fill="none" stroke="#368fcf" stroke-width="1.200"/><text x="5" y="12" class="bt it" font-size="9.500">du</text></svg><span>积分：压力作用投影面积</span><i>(intop2) {intop2}</i></div>
        <div class="row l3"><svg class="tw"><use href="#shut"/></svg><svg><use href="#t-sys"/></svg><span>边界坐标系 1</span><i>(sys1) {sys1}</i></div>
        <div class="row l3"><svg class="tw"><use href="#shut"/></svg><svg viewBox="0 0 16 16"><use href="#t-view"/><text x="4.500" y="9" class="gt" font-size="8.500">xy</text></svg><span>视图 1</span><i>{view1}</i></div>
        <div class="row l2"><svg class="tw"><use href="#open"/></svg><svg><use href="#t-geom"/></svg><span>几何 1</span><i>{geom1}</i></div>
        <div class="row l3"><svg class="tw"></svg><svg><use href="#t-imp"/></svg><span>导入 1</span><i>(imp1) {imp1}</i></div>
        <div class="row l3"><svg class="tw"></svg><svg><use href="#t-fin"/></svg><span>形成联合体</span><i>(fin) {fin}</i></div>
        <div class="row l2"><svg class="tw"><use href="#open"/></svg><svg><use href="#t-mat"/></svg><span>材料</span></div>
        <div class="row l3"><svg class="tw"><use href="#shut"/></svg><svg><use href="#t-mat"/></svg><span>Air</span><i>(mat1) {mat1}</i></div>
        <div class="row l2"><svg class="tw"><use href="#open"/></svg><svg><use href="#t-ht"/></svg><span>流体传热</span><i>(ht) {ht}</i></div>
        <div class="row l3"><svg class="tw"><use href="#open"/></svg><div class="dic"><svg><use href="#t-dom"/></svg><b>D</b></div><span>流体 1</span><i>{fluid1}</i></div>
        <div class="row l4"><svg class="tw"><use href="#shut"/></svg><svg><use href="#t-dom"/></svg><span>压力功 1</span><i>{pw1}</i></div>
        <div class="row l4"><svg class="tw"></svg><svg viewBox="0 0 16 16"><text x="0" y="6" class="eq">au</text><path d="M0 7.500h10" stroke="#3f74a8"/><text x="0" y="15" class="eq">at</text><text x="9.500" y="10" class="eq">=f</text></svg><span>方程视图</span><i>{info}</i></div>
        <div class="row l3"><svg class="tw"><use href="#shut"/></svg><div class="dic"><svg><use href="#t-dom"/></svg><b>D</b></div><span>初始值 1</span><i>{init1}</i></div>
        <div class="row l3"><svg class="tw"><use href="#shut"/></svg><div class="dic"><svg><use href="#t-bnd"/></svg><b>D</b></div><span>轴对称 1</span><i>{axi1}</i></div>
        <div class="row l3"><svg class="tw"><use href="#shut"/></svg><div class="dic"><svg><use href="#t-bnd"/></svg><b>D</b></div><span>热绝缘 1</span><i>{ins1}</i></div>
        <div class="row l3"><svg class="tw"><use href="#shut"/></svg><svg><use href="#t-dom"/></svg><span>热源 1</span><i>{hs1}</i></div>
        <div class="row l3"><svg class="tw"></svg><svg viewBox="0 0 16 16"><text x="0" y="6" class="eq">au</text><path d="M0 7.500h10" stroke="#3f74a8"/><text x="0" y="15" class="eq">at</text><text x="9.500" y="10" class="eq">=f</text></svg><span>方程视图</span><i>{info}</i></div>
        <div class="row l2"><svg class="tw"><use href="#open"/></svg><svg><use href="#t-du"/></svg><span>系数形式偏微分方程</span><i>(c) {c}</i></div>
        <div class="row l3 sel"><svg class="tw"><use href="#shut"/></svg><div class="dic"><svg><use href="#t-dom"/></svg><b>D</b></div><span>系数形式偏微分方程 1</span><i>{cfeq1}</i></div>
        <div class="row l3"><svg class="tw"><use href="#shut"/></svg><div class="dic"><svg><use href="#t-bnd"/></svg><b>D</b></div><span>零通量 1</span><i>{zflx1}</i></div>
        <div class="row l3"><svg class="tw"><use href="#shut"/></svg><div class="dic chg"><svg><use href="#t-dom"/></svg><b>D</b></div><span>初始值 1</span><i>{init1}</i></div>
        <div class="row l3"><svg class="tw"></svg><svg viewBox="0 0 16 16"><text x="0" y="6" class="eq">au</text><path d="M0 7.500h10" stroke="#3f74a8"/><text x="0" y="15" class="eq">at</text><text x="9.500" y="10" class="eq">=f</text></svg><span>方程视图</span><i>{info}</i></div>
        <div class="row l2"><svg class="tw"></svg><svg><use href="#t-mesh"/></svg><span>网格 1</span><i>{mesh1}</i></div>
        <div class="row l1"><svg class="tw"><use href="#open"/></svg><svg><use href="#t-std"/></svg><span>研究：热力学分析</span><i>{std1}</i></div>
        <div class="row l2"><svg class="tw"></svg><svg><use href="#t-step"/></svg><span>步骤 1: 瞬态</span><i>{time}</i></div>
        <div class="row l2"><svg class="tw"><use href="#shut"/></svg><svg><use href="#t-sol"/></svg><span>求解器配置</span></div>
        <div class="row l1"><svg class="tw"><use href="#open"/></svg><svg><use href="#t-res"/></svg><span>结果</span></div>
        <div class="row l2"><svg class="tw"><use href="#shut"/></svg><svg><use href="#t-data"/></svg><span>数据集</span></div>
      </div>
      <div class="vs"><svg class="btn" viewBox="0 0 17 17"><path d="M5 10l3.500-3.500L12 10"/></svg><i class="th"></i><i class="sp"></i><svg class="btn" viewBox="0 0 17 17"><path d="M5 7l3.500 3.500L12 7"/></svg></div>
      <div class="hs"><svg class="btn" viewBox="0 0 17 17"><path d="M10 5L6.500 8.500 10 12"/></svg><i class="th"></i><i class="sp"></i><svg class="btn" viewBox="0 0 17 17"><path d="M7 5l3.500 3.500L7 12"/></svg></div>
      <div class="corner"></div>
    </div>
    <div class="mark m1"></div>
  </section>

  <section class="panel settings">
    <div class="phead"><h2>设置</h2><svg class="tri dd"><use href="#tri"/></svg><svg class="pin"><use href="#pin"/></svg></div>
    <h3>系数形式偏微分方程</h3>
    <div class="line lab"><span>标签:</span><div class="inp">系数形式偏微分方程 1</div><div class="sq"><svg viewBox="0 0 16 16"><path d="M1.500 1.500h13v12h-13z" fill="#fff" stroke="#777"/><path d="M1.500 1.500h13v2.500h-13z" fill="#bbb" stroke="#777"/><path d="M4.500 7h8M4.500 9.500h8" stroke="#1aa382"/><path d="M0 10.500h4.500V15L3 13.500 1 15.500-.5 14 1.500 12z" fill="#1aa382" stroke="#fff" stroke-width=".5"/></svg></div></div>
    <div class="sec open"><svg><use href="#tri"/></svg><span>域选择</span></div>
    <div class="line pick"><span>选择:</span><div class="cmb off">所有域<svg class="tri"><use href="#tri"/></svg></div></div>
    <div class="dom">
      <div class="toggle"><svg viewBox="0 0 30 14"><rect x=".7" y=".7" width="28.600" height="12.600" rx="1.500" fill="#e8e8e8" stroke="#46546b" stroke-width="1.200"/><rect x="3" y="4" width="15" height="6" rx="3" fill="#4aa93f"/><path d="M18.500 2.500h9v9h-9z" fill="#b0b0b0" stroke="#46546b"/></svg></div>
      <div class="list"><p>1 (不适用)</p><p>2</p><p>3 (不适用)</p></div>
      <div class="acts">
        <svg><use href="#s-cubes"/></svg><svg viewBox="0 0 16 16"><path d="M1.500 8h13M8 1.500v13" stroke="#999"/></svg>
        <svg><use href="#q-copy"/></svg><svg viewBox="0 0 16 16"><path d="M1.500 8h13" stroke="#999"/></svg>
        <svg><use href="#q-paste"/></svg><svg><use href="#desel"/></svg>
        <svg><use href="#z-fit"/></svg>
      </div>
    </div>
    <div class="sec"><svg><use href="#shut"/></svg><span>替代与共存</span></div>
    <div class="sec"><svg><use href="#shut"/></svg><span>方程</span></div>
    <div class="sec open"><svg><use href="#tri"/></svg><span>扩散系数</span></div>
    <div class="line coef two"><i>c</i><div class="stack"><div class="inp">0</div><div class="cmb">各向同性<svg class="tri"><use href="#tri"/></svg></div></div><span class="u">m²</span></div>
    <div class="sec open"><svg><use href="#tri"/></svg><span>吸收系数</span></div>
    <div class="line coef ka"><i>a</i><div class="inp">1</div><span class="u">1</span></div>
    <div class="sec open"><svg><use href="#tri"/></svg><span>源项</span></div>
    <div class="line coef kf"><i>f</i><div class="inp">m/V*R_air*T</div><span class="u">Pa</span><div class="mark m2"></div></div>
    <div class="sec open"><svg><use href="#tri"/></svg><span>质量系数</span></div>
    <div class="line coef ke"><i>e<small>a</small></i><div class="inp">0</div><span class="u">s²</span></div>
    <div class="sec open"><svg><use href="#tri"/></svg><span>阻尼或质量系数</span></div>
    <div class="line coef kd"><i>d<small>a</small></i><div class="inp">0</div><span class="u">s</span></div>
    <div class="sec"><svg><use href="#shut"/></svg><span>守恒通量对流系数</span></div>
    <div class="sec"><svg><use href="#shut"/></svg><span>对流系数</span></div>
    <div class="sec"><svg><use href="#shut"/></svg><span>守恒通量源</span></div>
  </section>

  <div class="right">
    <section class="panel graphics">
      <div class="ptabs"><span class="on">图形</span><span class="cl">函数图<svg><use href="#x"/></svg></span><span class="cl">收敛图 1<svg><use href="#x"/></svg></span><div class="tools"><svg class="tri dd"><use href="#tri"/></svg><svg class="pin"><use href="#pin"/></svg></div></div>
      <div class="gbar">
        <svg class="ic"><use href="#z-in"/></svg><svg class="ic"><use href="#z-lens"/></svg><svg class="ic"><use href="#z-box"/></svg><svg class="tr"><use href="#tri"/></svg><svg class="ic"><use href="#z-fit"/></svg><svg class="ic"><use href="#z-ext"/></svg><i></i>
        <svg class="ic"><use href="#z-axes"/></svg><svg class="tr"><use href="#tri"/></svg><i></i>
        <svg class="ic"><use href="#t-dom"/></svg><svg class="tr"><use href="#tri"/></svg><i></i>
        <svg class="ic"><use href="#z-dom1"/></svg><svg class="tr g"><use href="#tri"/></svg><svg class="ic"><use href="#z-dom2"/></svg><svg class="tr g"><use href="#tri"/></svg><svg class="ic"><use href="#sel"/></svg><svg class="ic"><use href="#desel"/></svg><i></i>
        <svg class="ic"><use href="#z-hide"/></svg><svg class="ic"><use href="#z-reset"/></svg><svg class="ic"><use href="#z-view"/></svg><svg class="tr"><use href="#tri"/></svg><i></i>
        <span class="act"><svg class="ic"><use href="#z-grid"/></svg></span><i></i>
        <svg class="ic"><use href="#z-clip"/></svg><svg class="ic"><use href="#z-pal"/></svg><svg class="tr"><use href="#tri"/></svg><i></i>
        <svg class="ic"><use href="#z-ap"/></svg><svg class="tr"><use href="#tri"/></svg><svg class="ic"><use href="#z-cam"/></svg><svg class="ic"><use href="#z-prn"/></svg>
      </div>
      <svg class="plot" viewBox="876 207 856 609">
        <path d="M876 207h856v609H876z" fill="#fff"/>
        <!-- symmetry axis -->
        <path d="M1083 216v577" stroke="#c8c8c8" stroke-width="2" stroke-dasharray="14 2.800 1.300 2.800"/>
        <!-- piston -->
        <path d="M1083.500 676C1112 678 1135 686 1160 699.300C1168 704 1176 704 1184 701C1193 697 1200.500 687 1200.500 674.500C1206 668 1211 663 1217 662H1263Q1270 663 1270.800 671V696Q1270.500 699 1267 699H1254Q1249.500 699 1249.500 703V707Q1249.500 711 1254 711H1267Q1270.500 711 1270.800 714V725Q1270.500 727.500 1267 727.500H1254Q1249.500 727.500 1249.500 731V735Q1249.500 739 1254 739H1267Q1270.500 739 1270.800 743V761L1252.500 788.500H1158.500V746H1083.500Z" fill="#c8c8c8" stroke="#222"/>
        <!-- cylinder liner -->
        <path d="M1271 263H1292.500L1294 264.500V274.500H1310.500L1313 269.500H1324L1326.800 274V318.500H1298C1294 319 1293 324 1296 326L1303.500 332V362C1298 363 1294 367 1294 372V627L1296 628.500H1301V683.500H1296L1294 686.500V753L1285 777.700H1271Z" fill="#c8c8c8" stroke="#333"/>
        <!-- combustion chamber -->
        <path d="M1083.500 263H1271V671Q1270 663 1263 662H1217C1211 663 1206 668 1200.500 674.500C1200.500 687 1193 697 1184 701C1176 704 1168 704 1160 699.300C1135 686 1112 678 1083.500 676Z" fill="#b4b3f3"/>
        <path d="M1083.500 263H1271V671Q1270 663 1263 662H1217C1211 663 1206 668 1200.500 674.500C1200.500 687 1193 697 1184 701C1176 704 1168 704 1160 699.300C1135 686 1112 678 1083.500 676" fill="none" stroke="#00f" stroke-width="1.500"/>
        <path d="M1083.500 263v413" stroke="#55c"/><path d="M1083 272v404" stroke="#00f" stroke-width="1.600" stroke-dasharray="3 1.500 3 14.200"/>
        <!-- frame and ticks -->
        <path d="M927 215H1723V793H927Z" fill="none" stroke="#808080" stroke-width="2"/>
        <path d="M990 207v8M1083 207v8M1177 207v8M1271 207v8M1364 207v8M1458 207v8M1552 207v8M1645 207v8M990 793v8M1083 793v8M1177 793v8M1271 793v8M1364 793v8M1458 793v8M1552 793v8M1645 793v8" stroke="#808080" stroke-width="2"/>
        <path d="M919 254h8M919 301h8M919 348h8M919 395h8M919 442h8M919 488.500h8M919 535.500h8M919 582.500h8M919 629h8M919 676h8M919 723h8M919 770h8M1723 254h8M1723 301h8M1723 348h8M1723 395h8M1723 442h8M1723 488.500h8M1723 535.500h8M1723 582.500h8M1723 629h8M1723 676h8M1723 723h8M1723 770h8" stroke="#808080" stroke-width="2"/>
        <path d="M922 352l5 5.500-5 5.500zM921 798l5.500-5 5.500 5z" fill="#000"/>
        <g class="ax end"><text x="918.500" y="264">0.16</text><text x="918.500" y="311">0.15</text><text x="918.500" y="358">0.14</text><text x="918.500" y="405">0.13</text><text x="918.500" y="452">0.12</text><text x="918.500" y="498.500">0.11</text><text x="918.500" y="545">0.1</text><text x="918.500" y="592">0.09</text><text x="918.500" y="639">0.08</text><text x="918.500" y="686">0.07</text><text x="918.500" y="733">0.06</text><text x="918.500" y="780">0.05</text></g>
        <g class="ax"><text x="990.500" y="811">-0.02</text><text x="1084" y="811">0</text><text x="1178" y="811">0.02</text><text x="1272" y="811">0.04</text><text x="1365" y="811">0.06</text><text x="1459" y="811">0.08</text><text x="1553" y="811">0.1</text><text x="1646" y="811">0.12</text><text class="ui" x="931" y="226">m</text><text class="ui" x="1707" y="788">m</text><text x="1085" y="789" fill="#b0b0b0">r=0</text></g>
        <use href="#logo" x="1697" y="220" width="21" height="21"/>
      </svg>
    </section>
    <section class="panel messages">
      <div class="ptabs"><span class="on cl">消息<svg><use href="#x"/></svg></span><span>进度</span><span>日志</span><span class="cl">表格 1<svg><use href="#x"/></svg></span><div class="tools"><svg class="tri dd"><use href="#tri"/></svg><svg class="pin"><use href="#pin"/></svg></div></div>
      <div class="msgbar"><svg class="br"><use href="#broom"/></svg><span class="act"><svg class="ic"><use href="#z-msg"/></svg></span></div>
      <div class="log">
        <div class="lines">
          <p>[2023年7月3日 下午3:13] 保存的文件：E:\Learning\Comsol\官方案例\三缸往复式发动机\跟着教程做的模型\三缸往复式发动机.mph (4 MB)</p>
          <p>[2023年7月3日 下午3:13] 保存的文件：E:\Learning\Comsol\官方案例\三缸往复式发动机\跟着教程做的模型\三缸往复式发动机.mph (4 MB)</p>
          <p>[2023年7月3日 下午3:14] 保存的文件：E:\Learning\Comsol\官方案例\三缸往复式发动机\跟着教程做的模型\三缸往复式发动机.mph (4 MB)</p>
          <p>[2023年7月3日 下午3:14] 保存的文件：E:\Learning\Comsol\官方案例\三缸往复式发动机\跟着教程做的模型\三缸往复式发动机.mph (4 MB)</p>
        </div>
        <div class="vs"><svg class="btn" viewBox="0 0 17 17"><path d="M5 10l3.500-3.500L12 10"/></svg><i class="sp"></i><i class="th"></i><svg class="btn" viewBox="0 0 17 17"><path d="M5 7l3.500 3.500L12 7"/></svg></div>
        <div class="hs"><svg class="btn" viewBox="0 0 17 17"><path d="M10 5L6.500 8.500 10 12"/></svg><i class="th"></i><i class="sp"></i><svg class="btn" viewBox="0 0 17 17"><path d="M7 5l3.500 3.500L7 12"/></svg></div>
        <div class="corner"></div>
      </div>
    </section>
  </div>
</main>
<footer>1.33 GB | 1.7 GB</footer>
</body>
</html>
```
FILE: styles.css
```css
* { box-sizing: border-box; }
body {
  margin: 0; width: 1740px; height: 1027px; overflow: hidden;
  display: flex; flex-direction: column;
  background: #fafbff; color: #000;
  font: 12px/16px "Noto Sans", "Noto Sans CJK SC", sans-serif;
}
h2, h3, p { margin: 0; font-weight: 300; }
p { font-weight: 400; }
svg { flex: none; display: block; }
.sprite { position: absolute; width: 0; height: 0; }
.tri { width: 8px; height: 5px; color: #000; }
.pin { width: 8px; height: 11px; }

/* title bar */
.titlebar { height: 23px; flex: none; display: flex; align-items: center; background: #9e5b68; }
.app { width: 17px; height: 17px; margin: -6px 0 0 0; }
.tsep { width: 2px; height: 14px; background: #b98b94; border-right: 1px solid #cdb0b6; }
.app + .tsep { margin: -4px 7px 0 12px; }
.quick { display: flex; gap: 8px; margin-top: -1px; }
.quick svg { width: 16px; height: 16px; filter: drop-shadow(0 0 2px rgba(255,255,255,.75)) drop-shadow(0 0 3px rgba(255,255,255,.5)); }
.qtri { width: 5px; height: 4px; margin: 0 7px 0 7px; }
.title {
  margin: 6px 0 0 522px; height: 12px; line-height: 9px; width: 267px;
  white-space: nowrap; letter-spacing: .18px;
  background: #bd929b; box-shadow: 0 0 5px 4px #bd929b;
}
.winctl { width: 112px; height: 20px; margin: 0 0 2px 435px; }

/* ribbon */
.ribbon { position: relative; margin: 0 7px 0; height: 118px; flex: none; border: 1px solid #d5d6da; border-top: 3px solid #fafbff; background: #fafbff; }
.tabs { height: 24px; display: flex; background: #ebecee; margin: 0 -1px; padding-left: 1px; line-height: 23px; }
.tabs span { padding: 0 9px; }
.tabs .file { background: #368cca; color: #fff; padding: 3px 0 0; width: 55px; height: 23px; line-height: 20px; margin: 1px 1px 0 0; text-align: center; }
.tabs .on { background: #fafbff; color: #368fcf; margin-top: 1px; line-height: 21px; }
.help { margin: 3px 3px 0 auto; width: 16px; height: 16px; background: #368cca; color: #fff; text-align: center; line-height: 16px; font-weight: 400; font-size: 13px; border-radius: 1px; }
.groups { display: flex; height: 89px; }
.grp { display: grid; grid-template-rows: 66px 16px; padding-top: 6px; position: relative; align-content: start; }
.grp > label { text-align: center; color: #666; padding-top: 2px; }
.grp::after { content: ""; position: absolute; right: 0; top: 8px; width: 1px; height: 75px; background: #d5d6da; }
.items { display: flex; white-space: nowrap; }
.items.ctr { justify-content: center; }
.isep { width: 1px; height: 59px; margin-top: 2px; background: #d5d6da; }
.rb { display: flex; flex-direction: column; align-items: center; }
.rb > svg:first-child { width: 32px; height: 32px; }
.rb > span { padding-top: 1px; }
.rb > .tri { width: 6px; height: 4px; margin-top: 4px; }
.rb > .pv { line-height: 12px; padding-top: 3px; }
.rb .two { font-style: normal; display: flex; gap: 4px; align-items: center; height: 12px; line-height: 12px; margin-top: 0; }
.rb .two .tri { width: 5px; height: 4px; }
.rb.dis { color: #aaa; } .rb.dis .tri { color: #bbb; }
.w42 { width: 42px; } .w44 { width: 44px; } .w46 { width: 46px; } .w48 { width: 48px; }
.w64 { width: 64px; } .w66 { width: 66px; } .w80 { width: 80px; } .w103 { width: 103px; }
.smalls { display: flex; flex-direction: column; margin-top: -4px; }
.smalls div { height: 22px; display: flex; align-items: center; gap: 3px; }
.smalls svg { width: 16px; height: 16px; overflow: visible; }
.g1 { width: 500px; } .g1 .items { padding-left: 8px; } .g1 .smalls { margin-left: 1px; }
.g2 { width: 56px; }
.g3 { width: 274px; } .g3 .c1 { margin-left: 10px; width: 75px; } .g3 .w64 { margin-left: 72px; }
.g3 .c2 { width: 0; } .g3 .isep { margin-left: 3px; }
.g4 { width: 286px; } .g4 .items { padding-left: 8px; } .g4 .c3 { width: 74px; margin-left: 1px; } .g4 .w64 { margin-left: -1px; }
.g5 { width: 145px; } .g5 .items { padding-left: 7px; }
.g6 { width: 57px; } .g7 { width: 69px; } .g8 { width: 91px; }
.num { font-family: "Noto Sans", sans-serif; fill: #b552a2; }

/* work area */
.work { display: flex; margin: 4px 7px 0; height: 845px; flex: none; }
.panel { border: 1px solid #d4d5da; position: relative; }
.phead { display: flex; align-items: center; height: 36px; }
.phead h2 { font-size: 21px; line-height: 30px; flex: 1; margin-top: -2px; }
.phead .tri, .tools .tri { width: 8px; height: 5px; color: #444; }
.phead .pin, .tools .pin { margin: 2px 3px 0 7px; color: #444; }
.phead .tri { margin-top: -2px; } .phead .pin { margin-top: 0; }

.builder { width: 378px; border-color: #9fd0f6; margin-right: 5px; padding-left: 4px; }
.builder h2 { color: #2a94e8; padding-left: 3px; }
.builder .phead .tri, .builder .phead .pin { color: #2f84c8; }
.mbar { height: 19px; display: flex; align-items: flex-start; padding-left: 3px; }
.mbar svg { width: 16px; height: 16px; margin-right: 7px; margin-top: -2px; }
.mbar svg.wide { width: 18px; margin-right: 4px; } .mbar svg.tri { width: 7px; height: 4px; margin: 5px 12px 0 0; }
.mbar .blue { color: #368fcf; } .mbar .gray { color: #999; }
.rr { transform: rotate(180deg); } .ru { transform: rotate(90deg); } .rd { transform: rotate(-90deg); }
.tree {
  width: 368px; height: 780px; border: 1px solid #cfd0d4; background: #fff;
  display: grid; grid-template: 761px 17px / 349px 17px;
}
.rows { overflow: hidden; }
.row { height: 20px; display: flex; align-items: center; white-space: nowrap; }
.row > svg, .dic { width: 16px; height: 16px; margin: 0 6px 0 -1px; flex: none; overflow: visible; }
.row > svg.tw { width: 8px; height: 9px; margin: 0 8px 0 5px; }
.row > span, .row > i { padding-top: 2px; }
.row i { margin-left: 7px; font-size: 12.500px; letter-spacing: .2px; word-spacing: 1px; }
.l1 { padding-left: 20px; } .l2 { padding-left: 40px; } .l3 { padding-left: 60px; } .l4 { padding-left: 80px; }
.row.sel { background: #bfe1fd; }
.dic { position: relative; }
.dic svg { width: 16px; height: 16px; }
.dic b { position: absolute; left: 0; top: 0; width: 7px; height: 8px; background: #fff; font: bold 8px/8px "Liberation Serif", serif; text-align: center; }
.chg::after { content: ""; position: absolute; left: 1px; top: 8px; width: 5px; height: 4px; background: #e8592b; border-radius: 0 0 3px 3px; outline: 1px solid #fff; }
.bt { fill: #368fcf; } .it { font-style: italic; } .gt { fill: #888; } .eq { font-size: 8px; fill: #3f74a8; }

.btn { width: 17px; height: 17px; background: #f5f5f6; fill: none; stroke: #c4c5c8; stroke-width: 1.500; }
.vs { display: flex; flex-direction: column; } .hs { display: flex; }
.th { background: #e6e6e7; } .sp { background: #fff; }
.corner { background: #efeff0; }
.tree .vs .th { height: 576px; } .tree .vs .sp { flex: 1; }
.tree .hs .th { width: 289px; } .tree .hs .sp { flex: 1; }

.mark { position: absolute; border: 2px solid #ed1c24; }
.m1 { left: 65px; top: 611px; width: 219px; height: 30px; }

/* settings */
.settings { width: 480px; margin-right: 5px; }
.settings h2 { color: #2b5aa0; padding-left: 7px; }
.settings h3 { color: #3c66a6; font-size: 15px; line-height: 16px; padding-left: 6px; height: 20px; margin-bottom: 11px; }
.line { display: flex; padding: 0 5px; position: relative; }
.line > span:first-child { width: 37px; line-height: 20px; }
.inp { flex: 1; height: 20px; line-height: 17px; padding-left: 2px; border: 1px solid #d0d1d5; background: #fff; }
.sq { width: 20px; height: 22px; margin: -1px 0 0 8px; border: 1px solid #cfcfd3; border-radius: 2px; background: #eeeef0; padding: 2px 1px; }
.sq svg { width: 16px; height: 16px; }
.sec { height: 26px; background: #dee8f4; font-size: 13px; line-height: 20px; display: flex; align-items: center; margin-bottom: 2px; }
.sec span { padding-bottom: 4px; }
.sec svg { width: 8px; height: 10px; margin: 0 12px 0 6px; color: #444; flex: none; }
.sec.open svg { height: 5px; width: 9px; margin: -1px 11px 0 6px; }
.lab { height: 30px; }
.pick { padding-top: 7px; height: 34px; }
.pick > span:first-child { line-height: 21px; }
.cmb { flex: 1; height: 21px; line-height: 18px; border: 1px solid #cfd0d3; border-radius: 2px; padding: 0 6px 0 12px; background: linear-gradient(#f3f3f4, #e6e6e7); display: flex; align-items: center; justify-content: space-between; }
.cmb.off { background: #f3f3f4; color: #8a8a8a; border-color: #e6e7ea; } .cmb.off .tri { color: #ddd; }
.dom { display: flex; height: 131px; padding-left: 5px; }
.toggle { width: 38px; height: 38px; border: 1px solid #2f9bf0; border-radius: 2px; background: #9ccdf8; display: grid; place-items: center; margin: 1px 8px 0 0; }
.toggle svg { width: 30px; height: 14px; }
.list { width: 364px; height: 120px; border: 1px solid #d0d1d5; border-bottom-width: 3px; padding: 1px 6px; line-height: 21px; }
.acts { display: grid; grid-template-columns: 28.500px 16px; grid-auto-rows: 20px; margin-left: 13px; align-content: start; }
.acts svg { width: 16px; height: 16px; }
.coef { padding: 7px 5px 11px 7px; height: 64px; }
.sec + .coef { height: 38px; }
.sec + .coef.two { height: 65px; }
.coef i { width: 19px; font-size: 13px; line-height: 19px; }
.coef.two i { padding-top: 13px; }
.coef small { font-size: 10px; position: relative; top: 3px; margin-left: 1px; }
.stack { flex: 1; display: grid; grid-template-rows: 20px 21px; gap: 6px; }
.u { text-align: right; line-height: 19px; width: 26px; }
.ka .u { width: 17px; } .kf .u { width: 24px; } .kf i { width: 18px; }
.ke i { width: 24px; } .ke .u { width: 21px; } .kd i { width: 25px; } .kd .u { width: 16px; }
.m2 { left: 1px; top: -4px; width: 118px; height: 41px; }

/* graphics and messages */
.right { display: flex; flex-direction: column; width: 858px; }
.graphics { height: 672px; margin-bottom: 5px; }
.messages { height: 168px; }
.ptabs { height: 31px; border-bottom: 1px solid #d4d5da; display: flex; align-items: flex-end; padding-left: 4px; gap: 8px; font-size: 13px; }
.ptabs > span { height: 25px; line-height: 20px; background: #ebebeb; padding: 0 4px 1px; display: flex; align-items: center; }
.ptabs > span.on { background: #fafbff; border: 1px solid #d4d5da; border-bottom: 0; height: 26px; margin-bottom: -1px; color: #2b5aa0; }
.ptabs > span.cl { padding-right: 6px; gap: 8px; }
.ptabs > span svg { width: 10px; height: 10px; margin-top: -1px; }
.tools { margin-left: auto; display: flex; align-items: center; height: 18px; }
.gbar { height: 30px; display: flex; align-items: center; padding: 3px 0 0 3px; }
.ic { width: 17px; height: 16px; margin: 0 3.200px; color: #368fcf; }
.tr { width: 7px; height: 4px; margin: 0 8px 0 2.500px; color: #000; }
.tr.g { color: #555; }
.gbar > i { width: 1px; height: 16px; background: #d0d1d5; margin: 0 3.500px; }
.act { width: 20px; height: 20px; border: 1px solid #2f9bf0; border-radius: 2px; background: #9ccdf8; display: grid; place-items: center; }
.act .ic { margin: 0; width: 16px; height: 16px; }
.plot { width: 856px; height: 609px; }
.ax { font: 12.200px "DejaVu Sans", sans-serif; }
.end { text-anchor: end; }
.ui { font-family: "Noto Sans", sans-serif; }
.msgbar { height: 30px; display: flex; align-items: center; padding: 4px 0 0 9px; gap: 8px; }
.br { width: 11px; height: 17px; }
.log { margin-left: 4px; width: 848px; height: 101px; border: 1px solid #cfd0d4; display: grid; grid-template: 82px 17px / 829px 17px; }
.lines { overflow: hidden; white-space: nowrap; padding-left: 2px; line-height: 17px; letter-spacing: .09px; word-spacing: 1px; }
.lines p:first-child { margin-top: -3px; }
.log .vs .sp { height: 40px; } .log .vs .th { flex: 1; }
.log .hs .th { width: 718px; background: #e4e5e7; } .log .hs .sp { flex: 1; }

footer { margin-top: 13px; padding-left: 1057px; line-height: 16px; }
```
